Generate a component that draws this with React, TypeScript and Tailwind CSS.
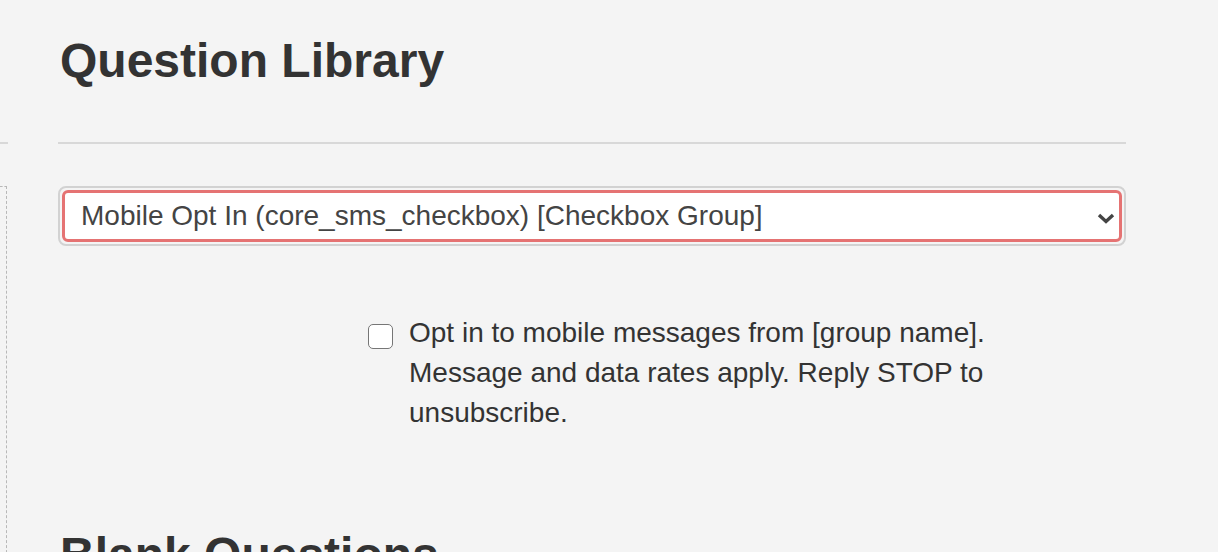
import { useState } from 'react'

const questions = [
    'Mobile Opt In (core_sms_checkbox) [Checkbox Group]',
    'Email Opt In (core_email_checkbox) [Checkbox Group]',
    'Phone Number (core_phone) [Text]',
]

function QuestionSelect() {
    const [value, setValue] = useState(questions[0])

    return (
        <div className="relative rounded-[8px] border-2 border-[#d2d2d2] p-[2px]">
            <select
                value={value}
                onChange={(e) => setValue(e.target.value)}
                className="block h-[52px] w-full appearance-none rounded-[6px] border-[3px] border-[#e57373] bg-white pl-[16px] pr-[48px] text-[28px] text-[#444] outline-none"
            >
                {questions.map((q) => (
                    <option key={q} value={q}>
                        {q}
                    </option>
                ))}
            </select>
            <svg
                className="pointer-events-none absolute right-[9px] top-[25px]"
                width="18"
                height="11"
                viewBox="0 0 18 11"
                fill="none"
            >
                <polyline points="2,2 9,8.5 16,2" stroke="#444" strokeWidth="3.4" />
            </svg>
        </div>
    )
}

export default function App() {
    const [checked, setChecked] = useState(false)

    return (
        <div className="flex min-h-screen overflow-hidden bg-[#f4f4f4] font-['Liberation_Sans',Arial,sans-serif] text-[#333]">
            {/* edge of the left panel */}
            <aside className="flex w-[7px] shrink-0 flex-col">
                <div className="h-[142px]" />
                <div className="h-[2px] w-[8px] bg-[#d8d8d8]" />
                <div className="h-[42px]" />
                <div className="flex-1 border-r border-t border-dashed border-[#b8b8b8]" />
            </aside>

            <main className="ml-[51px] w-[1068px] shrink-0">
                <h1 className="mt-[33px] pl-[2px] text-[48px] font-bold leading-[56px] text-[#333]">
                    Question Library
                </h1>
                <hr className="mt-[53px] h-[2px] border-0 bg-[#d8d8d8]" />

                <div className="mt-[42px]">
                    <QuestionSelect />
                </div>

                <label className="ml-[310px] mt-[67px] flex w-[640px] cursor-pointer items-start gap-[16px]">
                    <input
                        type="checkbox"
                        checked={checked}
                        onChange={() => setChecked(!checked)}
                        className="mt-[11px] h-[25px] w-[25px] shrink-0 appearance-none rounded-[5px] border-[1.5px] border-[#767676] bg-white checked:bg-[#e57373]"
                    />
                    <span className="w-[600px] text-[28px] leading-[40px] text-[#333]">
                        Opt in to mobile messages from [group name]. Message and data rates
                        apply. Reply STOP to unsubscribe.
                    </span>
                </label>

                <h2 className="mt-[94px] pl-[2px] text-[48px] font-bold leading-[56px] text-[#333]">
                    Blank Questions
                </h2>
            </main>
        </div>
    )
}
